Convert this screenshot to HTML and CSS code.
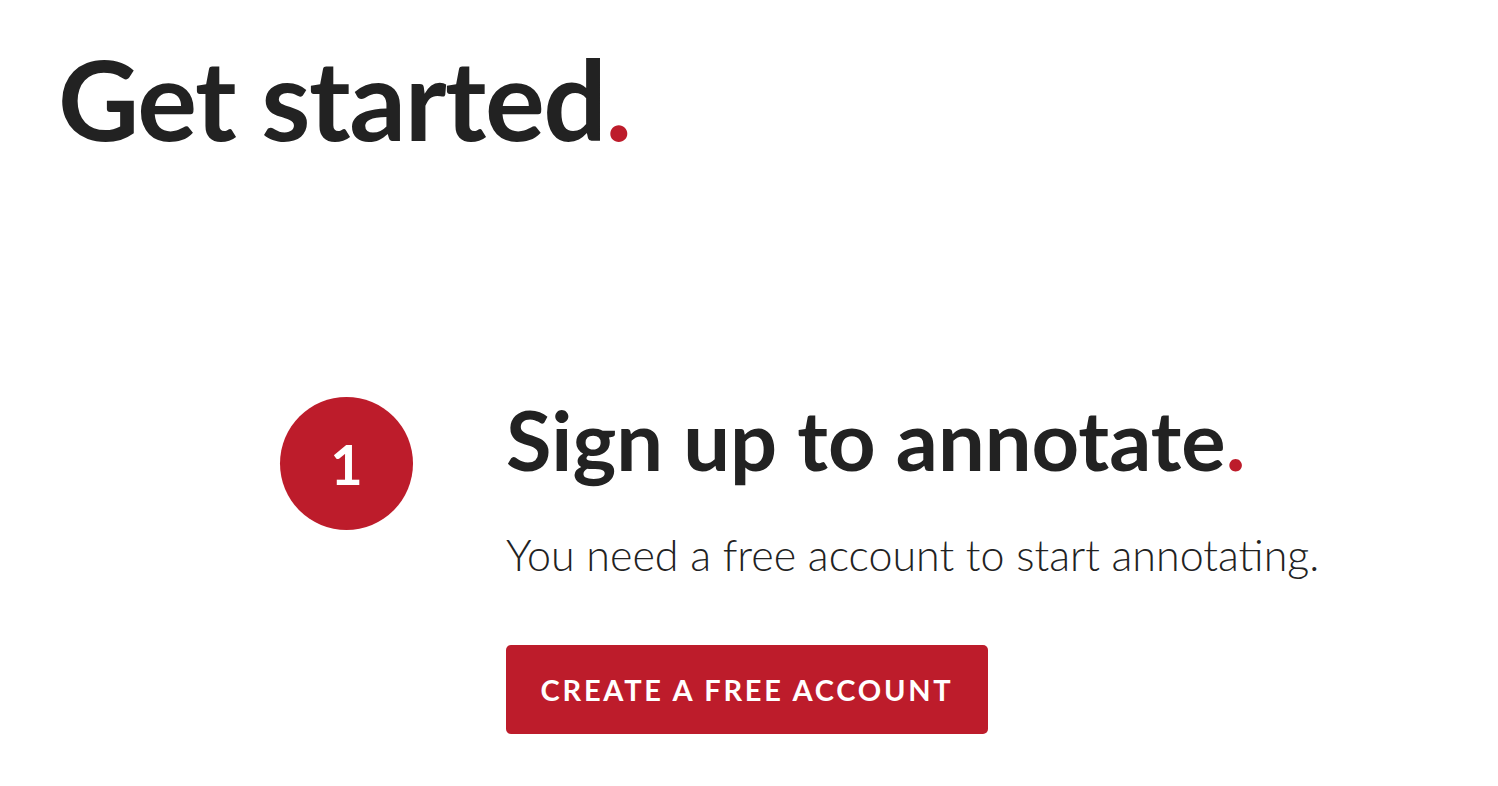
FILE: index.html
```html
<!DOCTYPE html>
<html lang="en">
<head>
<meta charset="utf-8">
<title>Get started</title>
<link rel="stylesheet" href="styles.css">
</head>
<body>
<main class="page">
  <h1 class="title">Get started<span class="dot">.</span></h1>
  <section class="step">
    <div class="step-num">1</div>
    <div class="step-body">
      <h2 class="step-title">Sign up to annotate<span class="dot">.</span></h2>
      <p class="step-text">You need a free account to start annotating.</p>
      <a class="btn" href="#">CREATE A FREE ACCOUNT</a>
    </div>
  </section>
</main>
</body>
</html>
```
FILE: styles.css
```css
html, body {
  margin: 0;
  padding: 0;
  background: #ffffff;
}
body {
  font-family: Lato, "Open Sans", sans-serif;
  color: #222222;
}
.page {
  padding: 28px 0 0 58px;
}
.title {
  margin: 0;
  font-size: 112px;
  font-weight: 700;
  line-height: 140px;
  letter-spacing: -1.4px;
}
.dot {
  color: #bd1c2b;
}
.step {
  display: flex;
  align-items: flex-start;
  gap: 93px;
  margin: 229px 0 0 222px;
}
.step-num {
  flex: none;
  width: 133px;
  height: 133px;
  border-radius: 50%;
  background: #bd1c2b;
  color: #ffffff;
  font-size: 56px;
  font-weight: 700;
  display: flex;
  align-items: center;
  justify-content: center;
}
.step-body {
  display: flex;
  flex-direction: column;
  align-items: flex-start;
}
.step-title {
  margin: 0;
  font-size: 83px;
  font-weight: 700;
  line-height: 84px;
}
.step-text {
  margin: 49px 0 0;
  font-size: 43px;
  font-weight: 300;
  line-height: 50px;
}
.btn {
  margin-top: 65px;
  display: inline-flex;
  align-items: center;
  justify-content: center;
  width: 482px;
  height: 89px;
  border-radius: 5px;
  background: #bd1c2b;
  color: #ffffff;
  text-decoration: none;
  font-size: 29px;
  font-weight: 700;
  letter-spacing: 2.75px;
}
```
